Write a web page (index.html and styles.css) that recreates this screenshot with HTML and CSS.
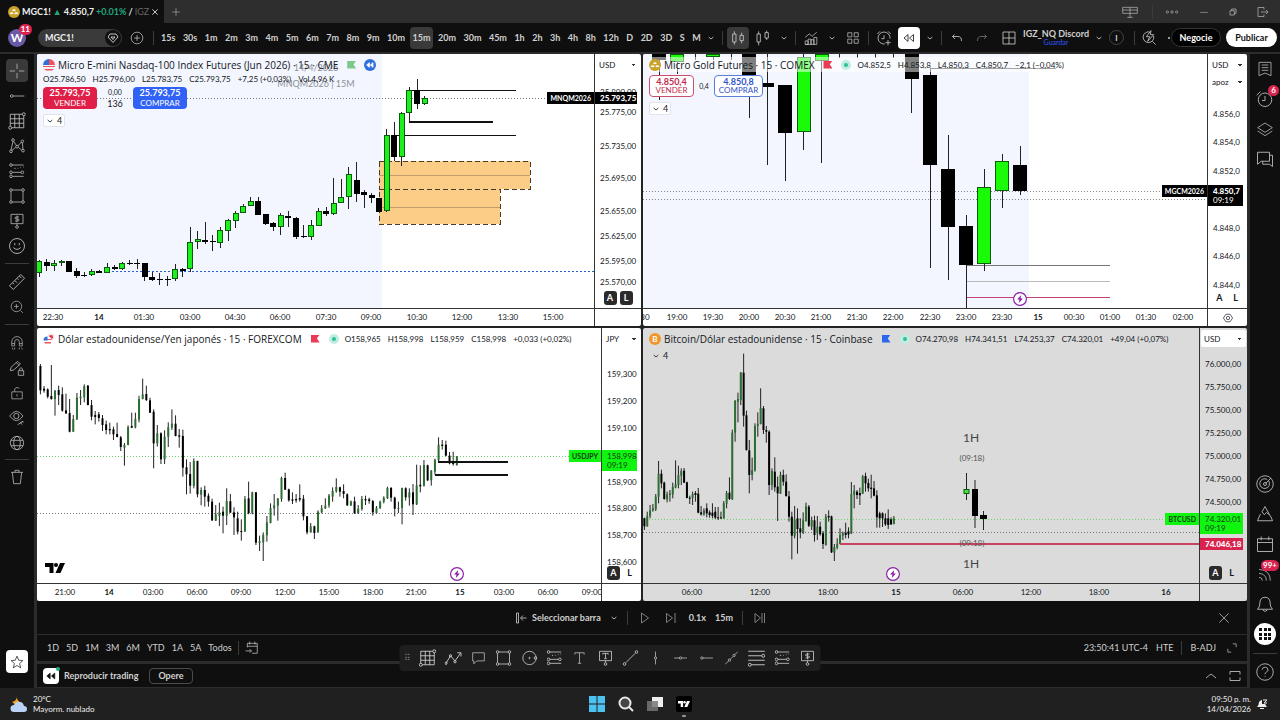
FILE: index.html
```html
<!DOCTYPE html>
<html lang="es">
<head>
<meta charset="utf-8">
<title>MGC1! 4.850,7 +0.01% / IGZ_NQ Discord</title>
<link rel="stylesheet" href="styles.css">
</head>
<body>
<svg class="sprite" aria-hidden="true">
  <symbol id="i-caret" viewBox="0 0 24 24"><path d="M5 9l7 6 7-6"/></symbol>
  <symbol id="i-up" viewBox="0 0 24 24"><path d="M2 16l10-8 10 8"/></symbol>
  <symbol id="i-close" viewBox="0 0 24 24"><path d="M4 4l16 16M20 4L4 20"/></symbol>
  <symbol id="i-plus" viewBox="0 0 24 24"><path d="M12 3v18M3 12h18"/></symbol>
  <symbol id="i-pluscircle" viewBox="0 0 24 24"><circle cx="12" cy="12" r="10"/><path d="M12 7v10M7 12h10"/></symbol>
  <symbol id="i-cross" viewBox="0 0 24 24"><path d="M12 1v8M12 15v8M1 12h8M15 12h8"/></symbol>
  <symbol id="i-hray" viewBox="0 0 24 24"><circle cx="4" cy="12" r="2"/><path d="M6 12h17"/></symbol>
  <symbol id="i-hline" viewBox="0 0 24 24"><circle cx="12" cy="12" r="2"/><path d="M1 12h9M14 12h9"/></symbol>
  <symbol id="i-vline" viewBox="0 0 24 24"><circle cx="12" cy="12" r="2"/><path d="M12 1v9M12 14v9"/></symbol>
  <symbol id="i-gann" viewBox="0 0 24 24"><path d="M3 3h16M3 3v16M21 5v16M5 21h16M3 9h18M3 15h18M9 3v18M15 3v18"/><circle cx="21" cy="3" r="2"/><circle cx="3" cy="21" r="2"/></symbol>
  <symbol id="i-pattern" viewBox="0 0 24 24"><circle cx="6" cy="3" r="2"/><circle cx="20" cy="5" r="2"/><circle cx="3" cy="20" r="2"/><circle cx="12" cy="13" r="2"/><circle cx="21" cy="19" r="2"/><path d="M6 5L3 18M7 5l4 6M19 6l-6 6M20 7l1 10M14 14l5 4M10 14l-6 5"/></symbol>
  <symbol id="i-fib" viewBox="0 0 24 24"><path d="M5 3h17M5 20h17M8 8h2M13 8h1M17 7h1M21 6h1M5 14h13"/><circle cx="3" cy="3" r="2"/><circle cx="3" cy="14" r="2"/><circle cx="3" cy="20" r="2"/><circle cx="20" cy="14" r="2"/></symbol>
  <symbol id="i-lines" viewBox="0 0 24 24"><path d="M1 3h22M1 9h18M1 15h22M5 21h18"/><circle cx="21" cy="9" r="2"/><circle cx="3" cy="21" r="2"/></symbol>
  <symbol id="i-rect" viewBox="0 0 24 24"><path d="M5 3h14M5 21h14M3 5v14M21 5v14"/><circle cx="3" cy="3" r="2"/><circle cx="21" cy="3" r="2"/><circle cx="3" cy="21" r="2"/><circle cx="21" cy="21" r="2"/></symbol>
  <symbol id="i-price" viewBox="0 0 24 24"><path d="M3 2h18v14H3zM12 16v3M15 6h-4q-2 0-2 1.500t2 1.500h2q2 0 2 1.500T13 12H9M12 4v10"/><circle cx="12" cy="21" r="2"/></symbol>
  <symbol id="i-tbox" viewBox="0 0 24 24"><path d="M3 2h18v14H3zM12 16v3M8 7V5h8v2M12 5v8M10 13h4"/><circle cx="12" cy="21" r="2"/></symbol>
  <symbol id="i-smile" viewBox="0 0 24 24"><circle cx="12" cy="12" r="10"/><path d="M9 8v3M15 8v3M7 14q5 5 10 0"/></symbol>
  <symbol id="i-ruler" viewBox="0 0 24 24"><path d="M2 17L17 2l5 5L7 22zM6 13l2 2M9 10l3 3M12 7l2 2M15 4l3 3"/></symbol>
  <symbol id="i-zoom" viewBox="0 0 24 24"><circle cx="11" cy="11" r="9"/><path d="M18 18l4 4M11 7v8M7 11h8"/></symbol>
  <symbol id="i-magnet" viewBox="0 0 24 24"><path d="M3 17v-7a9 9 0 0 1 18 0v7h-5v-7a4 4 0 0 0-8 0v7zM3 13h5M16 13h5M4 20l1 3M8 20v3M16 20v3M20 20l1 3"/></symbol>
  <symbol id="i-pencil" viewBox="0 0 24 24"><path d="M2 16l1-5L13 2l4 4L7 15zM11 4l4 4M14 16h8v7h-8zM16 16v-3q2-3 4 0v3M18 19v1"/></symbol>
  <symbol id="i-lock" viewBox="0 0 24 24"><path d="M3 10h18v12H3zM8 10V5q4-5 8-1M12 14v4"/></symbol>
  <symbol id="i-eye" viewBox="0 0 24 24"><path d="M1 9q10-14 20 0Q11 23 1 9z"/><circle cx="11" cy="9" r="4"/><path d="M13 22l5-3 3-2M16 18l4 4M19 17l3 1"/></symbol>
  <symbol id="i-globe" viewBox="0 0 24 24"><circle cx="12" cy="12" r="10"/><ellipse cx="12" cy="12" rx="5" ry="10"/><path d="M3 8h18M3 16h18"/></symbol>
  <symbol id="i-trash" viewBox="0 0 24 24"><path d="M3 5h18M9 5V2h6v3M5 5l2 17h10l2-17"/></symbol>
  <symbol id="i-star" viewBox="0 0 24 24"><path d="M12 2l3 7 7 .6-5.500 5 1.800 7.400L12 18l-6.300 4 1.800-7.400L2 9.600 9 9z"/></symbol>
  <symbol id="i-candles" viewBox="0 0 24 24"><path d="M4 6h5v12H4zM6.500 2v4M6.500 18v4M15 8h5v8h-5zM17.500 4v4M17.500 16v4"/></symbol>
  <symbol id="i-candles2" viewBox="0 0 24 24"><path d="M3 6h5v12H3zM5.500 2v4M5.500 18v5M15 4h5v8h-5zM17.500 1v3M17.500 12v3"/></symbol>
  <symbol id="i-ind" viewBox="0 0 24 24"><path d="M2 23v-6h5v6zM7 23V14h5v9M12 23v-8h5v8M17 23V11h5v12H2M2 11l7-6 5 4 8-7"/></symbol>
  <symbol id="i-grid4" viewBox="0 0 24 24"><path d="M3 3h7v7H3zM14 3h7v7h-7zM3 14h7v7H3zM14 14h7v7h-7z"/></symbol>
  <symbol id="i-alarmplus" viewBox="0 0 24 24"><path d="M13 21a9 9 0 1 1 8-8M12 8v5H8M2 6l4-4M18 2l4 4M18 15v8M14 19h8"/></symbol>
  <symbol id="i-rew" viewBox="0 0 24 24"><path d="M10 5v14L2 12zM21 5v14l-8-7z"/></symbol>
  <symbol id="i-undo" viewBox="0 0 24 24"><path d="M7 5L3 9l5 5M3 9h11q7 0 7 9"/></symbol>
  <symbol id="i-redo" viewBox="0 0 24 24"><path d="M17 5l4 4-5 5M21 9H10q-7 0-7 9"/></symbol>
  <symbol id="i-layout" viewBox="0 0 24 24"><path d="M3 3h18v18H3zM12 3v18M3 12h18"/></symbol>
  <symbol id="i-quick" viewBox="0 0 24 24"><path d="M13 3a8 8 0 1 0 6 6M17 17l5 5M15 1l-7 9h5l-3 7 9-10h-5z"/></symbol>
  <symbol id="i-gem" viewBox="0 0 24 24"><path d="M6 4h12l4 6-10 11L2 10zM8 10l4 5 4-5z"/></symbol>
  <symbol id="i-split" viewBox="0 0 24 24"><path d="M1 5h22v9H1zM12 5v15M1 9h22M8 20h8"/></symbol>
  <symbol id="i-dots" viewBox="0 0 24 24"><circle cx="4" cy="12" r="2"/><circle cx="12" cy="12" r="2"/><circle cx="20" cy="12" r="2"/></symbol>
  <symbol id="i-min" viewBox="0 0 24 24"><path d="M3 13h18"/></symbol>
  <symbol id="i-restore" viewBox="0 0 24 24"><path d="M3 8h13v13H3zM8 8V3h13v13h-5"/></symbol>
  <symbol id="i-exit" viewBox="0 0 24 24"><path d="M14 7V3H2v18h12v-4M8 12h14M18 8l4 4-4 4"/></symbol>
  <symbol id="i-list" viewBox="0 0 24 24"><path d="M3 2h18v20l-9-4-9 4zM7 6h10M7 10h10M7 14h10"/></symbol>
  <symbol id="i-alarm" viewBox="0 0 24 24"><circle cx="12" cy="13" r="9"/><path d="M12 8v6H8M1 7l5-5"/></symbol>
  <symbol id="i-layers" viewBox="0 0 24 24"><path d="M12 3l11 7-11 7L1 10zM1 15l11 7 11-7"/></symbol>
  <symbol id="i-chat" viewBox="0 0 24 24"><path d="M2 3h16v12H7l-5 4zM18 7h4v15l-4-3H9v-4"/></symbol>
  <symbol id="i-target" viewBox="0 0 24 24"><circle cx="12" cy="12" r="11"/><path d="M17 8a6.500 6.500 0 1 1-2-2"/><circle cx="12" cy="12" r="2"/><path d="M13 11l7-7"/></symbol>
  <symbol id="i-pyramid" viewBox="0 0 24 24"><path d="M12 2l6 11-4-3-3 3-3-4zM4 16l-2 5h20l-2-5-2-3M6 12l-2 4"/></symbol>
  <symbol id="i-cal" viewBox="0 0 24 24"><path d="M2 5h20v17H2zM2 10h20M7 2v5M17 2v5"/></symbol>
  <symbol id="i-calgo" viewBox="0 0 24 24"><path d="M4 11V4h17v17h-9M4 9h17M8 1v5M17 1v5M1 17h10M8 14l3 3-3 3"/></symbol>
  <symbol id="i-feed" viewBox="0 0 24 24"><path d="M3 5q17 1 17 17M3 11q11 1 11 11M3 17q5 0 5 5"/></symbol>
  <symbol id="i-bell" viewBox="0 0 24 24"><path d="M2 19h20q-3-3-3-7 0-9-7-9t-7 9q0 4-3 7zM9 20q3 4 6 0"/></symbol>
  <symbol id="i-help" viewBox="0 0 24 24"><circle cx="12" cy="12" r="11"/><path d="M8 9q1-4 4.500-3.500T16 9.500q0 1.500-2 2.500t-2 3M12 17.500v1"/></symbol>
  <symbol id="i-wave" viewBox="0 0 24 24"><path d="M2 19l6-10 6 7 7-10"/><circle cx="2" cy="19" r="1.500"/><circle cx="8" cy="9" r="1.500"/><circle cx="14" cy="17" r="1.500"/><path d="M17 5h5v5"/></symbol>
  <symbol id="i-note" viewBox="0 0 24 24"><path d="M2 3h20v14H9l-5 5v-5H2z"/></symbol>
  <symbol id="i-ellipse" viewBox="0 0 24 24"><circle cx="12" cy="12" r="10"/><circle cx="12" cy="12" r="1"/><circle cx="21" cy="12" r="2"/></symbol>
  <symbol id="i-text" viewBox="0 0 24 24"><path d="M4 6V3h16v3M12 3v18M9 21h6"/></symbol>
  <symbol id="i-trend" viewBox="0 0 24 24"><circle cx="3" cy="21" r="2"/><circle cx="21" cy="3" r="2"/><path d="M5 19L19 5"/></symbol>
  <symbol id="i-ext" viewBox="0 0 24 24"><path d="M1 23l6-6M10 14l5-5M18 6l5-5"/><circle cx="8.500" cy="15.500" r="2"/><circle cx="16.500" cy="7.500" r="2"/></symbol>
  <symbol id="i-selbar" viewBox="0 0 24 24"><path d="M3 2h4v20H3zM23 12H12M16 7l-5 5 5 5"/></symbol>
  <symbol id="i-play" viewBox="0 0 24 24"><path d="M5 2v20l14-10z"/></symbol>
  <symbol id="i-step" viewBox="0 0 24 24"><path d="M3 3v18l12-9zM20 2v20"/></symbol>
  <symbol id="i-skip" viewBox="0 0 24 24"><path d="M2 3v18l11-9zM16 2v20M21 2v20"/></symbol>
  <symbol id="i-expand" viewBox="0 0 24 24"><path d="M2 14v8h8M14 2h8v8"/></symbol>
  <symbol id="i-frame" viewBox="0 0 24 24"><path d="M2 9V3h20v6M2 15v6h20v-6"/></symbol>
  <symbol id="i-gear" viewBox="0 0 24 24"><path d="M7 3h10l6 9-6 9H7l-6-9z"/><circle cx="12" cy="12" r="4"/></symbol>
  <symbol id="i-bolt" viewBox="0 0 24 24"><circle cx="12" cy="12" r="11" fill="#fff"/><path d="M14 5l-7 8h4l-1 6 7-8h-4z" fill="#8b22a5" stroke="none"/></symbol>
  <symbol id="i-gold" viewBox="0 0 24 24"><circle cx="12" cy="12" r="12" fill="#c9a227" stroke="none"/><path d="M9 6h6l1.500 5h-9zM4 12h7l1 5H3zM13 12h7l1 5h-9z" fill="#fff" stroke="#c9a227"/></symbol>
  <symbol id="i-tv" viewBox="0 0 40 24"><path d="M0 2h17v20H9V10H0z" fill="currentColor" stroke="none"/><circle cx="22" cy="6" r="4" fill="currentColor" stroke="none"/><path d="M30 2h10l-9 20H21z" fill="currentColor" stroke="none"/></symbol>
</svg>

<header class="titlebar">
  <div class="tab">
    <svg class="ic s12"><use href="#i-gold"/></svg>
    <span class="tab-name">MGC1!</span><span class="up">▲</span><span>4.850,7</span><span class="up">+0.01%</span><span>/</span><span class="fade">IGZ</span>
    <button class="plain" aria-label="Cerrar pestaña"><svg class="ic s8"><use href="#i-close"/></svg></button>
  </div>
  <button class="plain newtab" aria-label="Nueva pestaña"><svg class="ic s10"><use href="#i-plus"/></svg></button>
  <div class="wincontrols">
    <button class="plain" aria-label="Dividir"><svg class="ic s16"><use href="#i-split"/></svg></button>
    <i class="vsep"></i>
    <button class="plain" aria-label="Más"><svg class="ic s14"><use href="#i-dots"/></svg></button>
    <button class="plain" aria-label="Minimizar"><svg class="ic s10"><use href="#i-min"/></svg></button>
    <button class="plain" aria-label="Restaurar"><svg class="ic s8"><use href="#i-restore"/></svg></button>
    <button class="plain" aria-label="Salir"><svg class="ic s12"><use href="#i-exit"/></svg></button>
  </div>
</header>

<nav class="toolbar">
  <button class="avatar" aria-label="Cuenta">W<span class="badge">11</span></button>
  <button class="symbol">MGC1!<span class="gem"><svg class="ic s12"><use href="#i-gem"/></svg></span></button>
  <button class="plain" aria-label="Comparar"><svg class="ic s14"><use href="#i-pluscircle"/></svg></button>
  <i class="vsep"></i>
  <div class="intervals">
    <button>15s</button><button>30s</button><button>1m</button><button>2m</button><button>3m</button><button>4m</button><button>5m</button><button>6m</button><button>7m</button><button>8m</button><button>9m</button><button>10m</button><button class="on">15m</button><button>20m</button><button>30m</button><button>45m</button><button>1h</button><button>2h</button><button>3h</button><button>4h</button><button>8h</button><button>12h</button><button>D</button><button>2D</button><button>3D</button><button>S</button><button>M</button>
  </div>
  <div class="tools">
    <button class="car" aria-label="Intervalos"><svg class="ic s8"><use href="#i-caret"/></svg></button>
    <i class="vsep"></i>
    <button class="tb on" aria-label="Velas"><svg class="ic s16"><use href="#i-candles"/></svg></button>
    <button class="tb" aria-label="Velas huecas"><svg class="ic s16"><use href="#i-candles2"/></svg></button>
    <button class="car" aria-label="Tipos"><svg class="ic s8"><use href="#i-caret"/></svg></button>
    <i class="vsep"></i>
    <button class="tb" aria-label="Indicadores"><svg class="ic s14"><use href="#i-ind"/></svg></button>
    <button class="car" aria-label="Favoritos"><svg class="ic s8"><use href="#i-caret"/></svg></button>
    <button class="tb" aria-label="Plantillas"><svg class="ic s14"><use href="#i-grid4"/></svg></button>
    <i class="vsep"></i>
    <button class="tb" aria-label="Alerta"><svg class="ic s16"><use href="#i-alarmplus"/></svg></button>
    <button class="tb white" aria-label="Repetición"><svg class="ic s12"><use href="#i-rew"/></svg></button>
    <button class="car" aria-label="Opciones de repetición"><svg class="ic s8"><use href="#i-caret"/></svg></button>
    <i class="vsep"></i>
    <button class="tb" aria-label="Deshacer"><svg class="ic s12"><use href="#i-undo"/></svg></button>
    <button class="tb dim" aria-label="Rehacer"><svg class="ic s12"><use href="#i-redo"/></svg></button>
  </div>
  <div class="account">
    <button class="tb" aria-label="Diseño"><svg class="ic s16"><use href="#i-layout"/></svg></button>
    <button class="layoutname">IGZ_NQ Discord<small>Guardar</small></button>
    <button class="car" aria-label="Diseños"><svg class="ic s8"><use href="#i-caret"/></svg></button>
    <button class="info" aria-label="Información">I</button>
    <i class="vsep"></i>
    <button class="tb" aria-label="Búsqueda rápida"><svg class="ic s16"><use href="#i-quick"/></svg></button>
    <i class="more"></i>
    <button class="pill dark">Negocie</button>
    <button class="pill light">Publicar</button>
  </div>
</nav>

<div class="workspace">
  <aside class="rail left">
    <button class="on" aria-label="Cruz"><svg class="ic s16"><use href="#i-cross"/></svg></button>
    <button aria-label="Rayo horizontal"><svg class="ic s16"><use href="#i-hray"/></svg></button>
    <button aria-label="Gann"><svg class="ic s18"><use href="#i-gann"/></svg></button>
    <button aria-label="Patrones"><svg class="ic s16"><use href="#i-pattern"/></svg></button>
    <button aria-label="Fibonacci"><svg class="ic s16"><use href="#i-fib"/></svg></button>
    <button aria-label="Rectángulo"><svg class="ic s16"><use href="#i-rect"/></svg></button>
    <button aria-label="Etiqueta de precio"><svg class="ic s16"><use href="#i-price"/></svg></button>
    <button aria-label="Iconos"><svg class="ic s18"><use href="#i-smile"/></svg></button>
    <hr>
    <button aria-label="Medir"><svg class="ic s18"><use href="#i-ruler"/></svg></button>
    <button aria-label="Ampliar"><svg class="ic s14"><use href="#i-zoom"/></svg></button>
    <hr>
    <button aria-label="Imán"><svg class="ic s14"><use href="#i-magnet"/></svg></button>
    <button aria-label="Modo dibujo"><svg class="ic s16"><use href="#i-pencil"/></svg></button>
    <button aria-label="Bloquear"><svg class="ic s14"><use href="#i-lock"/></svg></button>
    <button aria-label="Ocultar"><svg class="ic s16"><use href="#i-eye"/></svg></button>
    <button aria-label="Sincronizar"><svg class="ic s16"><use href="#i-globe"/></svg></button>
    <hr class="tight">
    <button aria-label="Eliminar"><svg class="ic s16"><use href="#i-trash"/></svg></button>
    <button class="fav" aria-label="Favoritos"><svg class="ic s14"><use href="#i-star"/></svg></button>
  </aside>

  <main class="center">
    <div class="charts">
      <section class="chart" id="c1">
        <div class="plot"></div>
        <div class="legend">
          <div class="ltitle"><svg class="s12 coin" viewBox="0 0 12 12"><circle cx="6" cy="6" r="6" fill="#f4f4f6"/><path d="M6 0a6 6 0 0 1 6 6H6zM6 2h5M6 7h6v1H0v-1zM1 10h10l-2 1.500H3z" fill="#ef5360"/><path d="M6 0v6H0a6 6 0 0 1 6-6z" fill="#2f6fd8"/></svg><h2>Micro E-mini Nasdaq-100 Index Futures (Jun 2026) · 15 · CME</h2><i class="flag green"></i><i class="rewdot"><svg class="ic s8"><use href="#i-rew"/></svg></i></div>
          <div class="ohlc"><span>O25.786,50</span><span>H25.796,00</span><span>L25.783,75</span><span>C25.793,75</span><span>+7,25 (+0,03%)</span><span>Vol.4,96 K</span></div>
          <div class="trade solid"><button class="sell"><b>25.793,75</b>VENDER</button><span class="spread"><small>0,00</small>136</span><button class="buy"><b>25.793,75</b>COMPRAR</button></div>
          <button class="count"><svg class="ic s8"><use href="#i-caret"/></svg>4</button>
        </div>
        <div class="prices"><select aria-label="Moneda"><option>USD</option></select><div class="al"><button class="on">A</button><button class="on">L</button></div></div>
        <div class="times"></div><div class="corner"></div>
      </section>
      <section class="chart" id="c2">
        <div class="plot"></div>
        <div class="legend">
          <div class="row"><div class="ltitle"><svg class="ic s12 coin"><use href="#i-gold"/></svg><h2>Micro Gold Futures · 15 · COMEX</h2><i class="flag red"></i><i class="live"></i></div>
          <div class="ohlc"><span>O4.852,5</span><span>H4.853,8</span><span>L4.850,3</span><span>C4.850,7</span><span>−2,1 (−0,04%)</span></div></div>
          <div class="trade outline"><button class="sell"><b>4.850,4</b>VENDER</button><span class="spread"><small>0,4</small></span><button class="buy"><b>4.850,8</b>COMPRAR</button></div>
          <button class="count"><svg class="ic s8"><use href="#i-caret"/></svg>4</button>
        </div>
        <div class="prices"><select aria-label="Moneda"><option>USD</option></select><select aria-label="Unidad"><option>apoz</option></select><div class="al"><button>A</button><button>L</button></div></div>
        <div class="times"></div><div class="corner"><svg class="ic s10"><use href="#i-gear"/></svg></div>
      </section>
      <section class="chart" id="c3">
        <div class="plot"></div>
        <div class="legend">
          <div class="row"><div class="ltitle"><svg class="s12 coin" viewBox="0 0 12 12"><circle cx="8" cy="4" r="3.500" fill="#f6dfe3"/><circle cx="8" cy="4" r="2" fill="#e23b4e"/><circle cx="4.500" cy="7.500" r="4" fill="#fff"/><path d="M1 9h7v1.500H2zM4 6h4.500v1H4z" fill="#ef5360"/><path d="M4.500 3.500v4h-4a4 4 0 0 1 4-4z" fill="#2f6fd8"/></svg><h2>Dólar estadounidense/Yen japonés · 15 · FOREXCOM</h2><i class="flag red"></i><i class="live"></i></div>
          <div class="ohlc"><span>O158,965</span><span>H158,998</span><span>L158,959</span><span>C158,998</span><span>+0,033 (+0,02%)</span></div></div>
        </div>
        <div class="prices"><select aria-label="Moneda"><option>JPY</option></select><div class="al"><button class="on">A</button><button>L</button></div></div>
        <div class="times"></div><div class="corner"></div>
      </section>
      <section class="chart gray" id="c4">
        <div class="plot"></div>
        <div class="legend">
          <div class="row"><div class="ltitle"><i class="btc coin">B</i><h2>Bitcoin/Dólar estadounidense · 15 · Coinbase</h2><i class="flag blue"></i><i class="live"></i></div>
          <div class="ohlc"><span>O74.270,98</span><span>H74.341,51</span><span>L74.253,37</span><span>C74.320,01</span><span>+49,04 (+0,07%)</span></div></div>
          <button class="count bare"><svg class="ic s8"><use href="#i-caret"/></svg>4</button>
        </div>
        <div class="prices"><select aria-label="Moneda"><option>USD</option></select><div class="al"><button class="on">A</button><button>L</button></div></div>
        <div class="times"></div><div class="corner"></div>
      </section>
    </div>

    <div class="replay">
      <div class="replay-mid">
        <button class="plain"><svg class="ic s12"><use href="#i-selbar"/></svg>Seleccionar barra<svg class="ic s8 gapl"><use href="#i-caret"/></svg></button>
        <i class="vsep"></i>
        <button class="plain mid" aria-label="Reproducir"><svg class="ic s12"><use href="#i-play"/></svg></button>
        <button class="plain mid" aria-label="Avanzar"><svg class="ic s12"><use href="#i-step"/></svg></button>
        <button class="plain">0.1x</button><button class="plain">15m</button>
        <i class="vsep"></i>
        <button class="plain mid" aria-label="Ir a tiempo real"><svg class="ic s12"><use href="#i-skip"/></svg></button>
      </div>
      <button class="plain rclose" aria-label="Cerrar repetición"><svg class="ic s14"><use href="#i-close"/></svg></button>
    </div>

    <div class="ranges">
      <button>1D</button><button>5D</button><button>1M</button><button>3M</button><button>6M</button><button>YTD</button><button>1A</button><button>5A</button><button>Todos</button>
      <i class="vsep"></i>
      <button aria-label="Ir a fecha"><svg class="ic s14"><use href="#i-calgo"/></svg></button>
      <div class="clock"><button>23:50:41 UTC-4</button><button>HTE</button><i class="vsep"></i><button>B-ADJ</button><button class="gapl" aria-label="Ampliar"><svg class="ic s10"><use href="#i-expand"/></svg></button></div>
    </div>

    <div class="trading">
      <button class="tb white small" aria-label="Repetición"><svg class="ic s10 solidic"><use href="#i-rew"/></svg><i class="dot"></i></button>
      <span>Reproducir trading</span>
      <button class="opere">Opere</button>
      <div class="tright"><button class="plain" aria-label="Abrir panel"><svg class="ic s12"><use href="#i-up"/></svg></button><button class="plain" aria-label="Maximizar panel"><svg class="ic s12"><use href="#i-frame"/></svg></button></div>
    </div>

    <div class="drawbar">
      <span class="grip">⠿</span>
      <button aria-label="Gann"><svg class="ic s18"><use href="#i-gann"/></svg></button>
      <button aria-label="Ondas"><svg class="ic s18"><use href="#i-wave"/></svg></button>
      <button aria-label="Nota"><svg class="ic s14"><use href="#i-note"/></svg></button>
      <button aria-label="Rectángulo"><svg class="ic s16"><use href="#i-rect"/></svg></button>
      <button aria-label="Círculo"><svg class="ic s16"><use href="#i-ellipse"/></svg></button>
      <button aria-label="Fibonacci"><svg class="ic s16"><use href="#i-fib"/></svg></button>
      <button aria-label="Texto"><svg class="ic s14"><use href="#i-text"/></svg></button>
      <button aria-label="Texto anclado"><svg class="ic s16"><use href="#i-tbox"/></svg></button>
      <button aria-label="Línea de tendencia"><svg class="ic s16"><use href="#i-trend"/></svg></button>
      <button aria-label="Línea vertical"><svg class="ic s14"><use href="#i-vline"/></svg></button>
      <button aria-label="Línea horizontal"><svg class="ic s14"><use href="#i-hline"/></svg></button>
      <button aria-label="Rayo"><svg class="ic s14"><use href="#i-hray"/></svg></button>
      <button aria-label="Línea extendida"><svg class="ic s14"><use href="#i-ext"/></svg></button>
      <button aria-label="Retroceso"><svg class="ic s18"><use href="#i-lines"/></svg></button>
      <button aria-label="Extensión"><svg class="ic s16"><use href="#i-fib"/></svg></button>
      <button aria-label="Precio"><svg class="ic s16"><use href="#i-price"/></svg></button>
    </div>
  </main>

  <aside class="rail right">
    <button aria-label="Lista"><svg class="ic s16"><use href="#i-list"/></svg></button>
    <button aria-label="Alertas"><svg class="ic s18"><use href="#i-alarm"/></svg><span class="badge">6</span></button>
    <button aria-label="Capas"><svg class="ic s16"><use href="#i-layers"/></svg></button>
    <button aria-label="Chats"><svg class="ic s18"><use href="#i-chat"/></svg></button>
    <button class="push" aria-label="Filtros"><svg class="ic s18"><use href="#i-target"/></svg></button>
    <button aria-label="Pine"><svg class="ic s18"><use href="#i-pyramid"/></svg></button>
    <button aria-label="Calendario"><svg class="ic s18"><use href="#i-cal"/></svg></button>
    <button aria-label="Noticias"><svg class="ic s16"><use href="#i-feed"/></svg><span class="badge">99+</span></button>
    <button aria-label="Notificaciones"><svg class="ic s18"><use href="#i-bell"/></svg></button>
    <button class="apps" aria-label="Productos"><svg class="s12" viewBox="0 0 12 12"><path d="M0 0h3v3H0zM5 0h3v3H5zM9 0h3v3H9zM0 5h3v3H0zM5 5h3v3H5zM9 5h3v3H9zM0 9h3v3H0zM5 9h3v3H5zM9 9h3v3H9z" fill="#111"/></svg></button>
    <hr>
    <button aria-label="Ayuda"><svg class="ic s18"><use href="#i-help"/></svg></button>
  </aside>
</div>

<footer class="taskbar">
  <div class="weather"><svg class="s18" viewBox="0 0 18 18"><path d="M7 1q-1 5 5 7l-5 3-5-4q5-1 5-6z" fill="#f5a623"/><path d="M4 17a3.500 3.500 0 0 1 0-7q2-4 6-3 3 0 4 4 3 0 3 3t-3 3z" fill="#b9d2f5"/></svg><p>20°C<br>Mayorm. nublado</p></div>
  <div class="apps-mid">
    <svg class="s16" viewBox="0 0 16 16"><path d="M0 0h7.500v7.500H0zM8.500 0H16v7.500H8.500zM0 8.500h7.500V16H0zM8.500 8.500H16V16H8.500z" fill="#4cc2f1"/></svg>
    <svg class="s16" viewBox="0 0 16 16"><circle cx="7" cy="7" r="5.500" fill="#444" stroke="#e8e8e8" stroke-width="2"/><path d="M11 11l4 4" stroke="#e8e8e8" stroke-width="2"/></svg>
    <svg class="s16" viewBox="0 0 16 16"><path d="M5 1h11v10H5z" fill="#eee"/><path d="M0 5h11v10H0z" fill="#777" fill-opacity=".85"/></svg>
    <span class="tvapp"><svg class="ic tvs"><use href="#i-tv"/></svg></span>
  </div>
  <div class="tray"><p>09:50 p. m.<br>14/04/2026</p><svg class="s12" viewBox="0 0 12 12"><path d="M1 9q2-2 2-5 3-4 6 0 0 3 2 5zM4 10h4v1H4z" fill="#eee"/><path d="M6 2h5v4H6z" fill="#202020"/><path d="M7 2h4L8 5h3" fill="none" stroke="#eee"/></svg></div>
</footer>
<script src="charts.js"></script>
</body>
</html>
```
FILE: charts.js
```js
// Candle rows: high, body top, body bottom, low (plot units), then 1 for a rising bar.
const c1 = [[260,261,273,277,1],[259,262,266,271],[260,263,266,271,1],[260,261,263,266,1],[261,261,272,272],[268,271,276,278],[272,275,276,277],[269,271,275,276,1],[270,271,273,273],[263,267,273,273,1],[265,267,269,270],[262,263,269,270,1],[260,263,264,265],[259,263,264,269],[263,263,277,281],[272,277,280,281],[273,279,280,285],[276,279,280,286],[264,269,279,281,1],[268,269,271,277],[227,242,269,272,1],[231,239,242,249,1],[222,240,242,244],[235,241,242,251],[227,230,243,248,1],[219,220,231,241,1],[211,213,221,228,1],[204,206,213,213,1],[197,201,206,206,1],[197,201,215,215],[214,214,224,225],[222,223,227,231],[213,215,227,235,1],[211,216,218,227],[217,218,237,239],[225,236,237,238],[220,225,237,240,1],[208,211,226,226,1],[207,211,214,216],[178,203,214,215,1],[179,197,203,203,1],[167,174,197,209,1],[162,180,194,202],[190,192,195,208],[193,195,198,203],[198,198,212,212],[129,135,211,212,1],[122,135,157,161],[112,113,157,166,1],[87,90,113,121,1],[79,90,104,109],[96,98,104,105,1]];
const c2 = [[54,54,60,100],[54,54,62,74,1],[54,54,54,60],[54,54,57,60,1],[54,54,54,60],[54,54,75,118],[54,83,87,165],[85,85,133,181],[54,57,132,150,1],[54,54,61,163,1],[54,54,54,58],[54,54,54,58],[54,54,54,58],[54,54,54,58],[54,54,79,113],[68,75,165,268],[135,169,227,280],[215,226,265,308],[169,187,264,271,1],[154,161,191,208,1],[146,165,191,195]];
const c3 = [[117,123,196,208],[183,191,197,203],[190,193,215,220],[120,213,222,224],[195,197,222,272,1],[182,195,210,240],[187,208,257,260],[206,256,265,267],[222,264,320,322],[270,282,320,321,1],[204,218,283,285,1],[195,215,220,240,1],[178,184,217,232,1],[180,182,240,241],[225,240,275,286],[258,270,276,298],[261,268,279,290],[270,280,300,318],[287,298,315,328],[293,312,316,328],[305,313,328,345],[293,327,336,337],[333,337,366,378],[354,360,368,422,1],[301,306,360,361,1],[263,303,308,309],[263,282,307,310,1],[212,222,284,292,1],[161,208,222,223,1],[182,207,225,228],[218,226,263,264],[253,260,355,430],[300,325,355,365,1],[322,325,403,417],[316,335,403,417,1],[292,307,335,366,1],[253,296,308,315,1],[271,296,333,334],[312,331,335,368],[314,333,428,455],[403,427,448,508],[411,447,482,506],[400,408,483,490,1],[407,408,508,517],[487,495,509,541,1],[482,495,515,545],[505,512,530,545],[521,530,586,588],[540,568,587,588,1],[533,562,573,603,1],[545,560,572,625],[490,528,572,600,1],[507,529,563,563],[547,562,577,630],[560,580,620,628],[583,618,621,647],[513,522,619,621,1],[470,520,564,568],[500,502,564,568,1],[501,502,653,660],[632,649,654,678,1],[622,630,652,708,1],[573,592,631,650,1],[535,549,594,595,1],[507,541,550,572,1],[519,521,542,587,1],[455,459,522,530,1],[443,459,494,495],[491,493,526,530],[502,523,527,537],[507,522,526,533],[478,519,524,530],[510,521,574,586],[573,574,622,628],[594,604,622,623,1],[602,604,624,642],[556,560,622,623,1],[540,550,562,565,1],[520,542,550,552,1],[507,512,541,548,1],[487,498,515,530,1],[460,486,499,503,1],[485,487,500,515],[478,498,507,520],[505,508,541,543],[527,529,541,543,1],[515,529,564,567],[540,551,565,567,1],[513,522,552,557,1],[512,522,526,540],[518,523,528,536],[525,528,562,572],[543,548,564,566,1],[527,530,549,552,1],[514,518,530,535,1],[485,489,520,522,1],[486,489,518,530],[515,518,551,574],[530,549,551,564,1],[488,489,549,598,1],[487,490,517,527],[490,502,518,542,1],[477,502,538,570],[419,481,538,540,1],[421,479,484,502],[405,420,482,485,1],[419,421,466,468],[435,437,466,482,1],[401,405,440,449,1],[337,359,406,411,1],[345,359,363,374],[347,359,392,394],[381,392,415,418],[380,413,417,422],[393,394,420,422,1]];
const c4 = [[578,580,604,615],[560,573,604,605,1],[540,556,573,580,1],[537,550,556,560,1],[507,515,553,558,1],[408,446,515,535,1],[434,446,475,490],[470,473,522,524],[500,508,523,532,1],[495,505,510,530,1],[473,486,508,520,1],[406,478,488,490,1],[422,450,480,490,1],[430,438,452,480,1],[429,437,473,474],[470,472,519,520],[512,518,520,537],[500,507,519,540,1],[498,504,510,530],[489,506,563,565],[543,562,568,572],[550,556,568,572,1],[535,550,565,577],[556,562,570,578],[535,563,573,580],[546,560,578,582],[546,577,580,585],[560,577,580,582],[528,535,580,581,1],[498,504,536,550,1],[457,503,522,525],[314,323,523,525,1],[225,228,323,350,1],[203,222,230,292,1],[141,143,225,240,1],[86,143,272,305],[257,271,375,377],[345,376,450,505],[398,435,450,466,1],[295,303,436,440,1],[262,297,303,335,1],[190,249,297,298,1],[243,250,315,327],[303,315,320,353],[316,320,480,510],[430,438,480,495,1],[397,440,487,500],[455,485,505,588],[440,449,506,507,1],[434,450,470,482],[448,470,513,515],[498,514,575,590],[560,575,632,703],[543,585,632,640,1],[550,580,612,686],[580,610,622,640],[562,586,622,627,1],[533,544,588,590,1],[540,545,602,606],[575,585,605,615,1],[572,586,630,650],[573,605,625,645,1],[590,605,628,632],[618,625,657,672],[567,575,660,662,1],[556,573,577,590],[572,574,682,684],[657,666,683,708,1],[640,656,668,673,1],[610,630,657,658,1],[620,625,632,645,1],[593,623,630,640],[607,619,628,640],[471,507,625,627,1],[480,497,509,550,1],[495,500,510,522],[488,504,511,540],[450,454,506,507,1],[443,453,475,500],[461,474,490,500],[449,488,492,520],[468,490,512,514],[496,511,577,608],[560,565,580,608],[562,565,580,606],[565,580,598,603],[553,580,600,612],[577,583,598,600],[573,580,597,598,1]];

const third = rows => rows.map(([h, t, b, l, up]) => [325 + h / 3, 325 + t / 3, 325 + b / 3, 325 + l / 3, up]);
const hl = (x1, x2, y, stroke, w = 1, dash = '') => `<line x1="${x1}" x2="${x2}" y1="${y}" y2="${y}" stroke="${stroke}" stroke-width="${w}" stroke-dasharray="${dash}"/>`;
const box = (x, y, w, h, fill, stroke, dash = '') => `<rect x="${x}" y="${y}" width="${w}" height="${h}" fill="${fill}" stroke="${stroke}" stroke-dasharray="${dash}"/>`;

function candles(rows, x0, step, w, up, edge) {
  return rows.map(([h, t, b, l, rise], i) => {
    const x = x0 + i * step;
    const wick = `<line x1="${x}" x2="${x}" y1="${h}" y2="${l}" stroke="#222" stroke-width="1"/>`;
    if (b <= t) return wick;
    const e = edge && rise ? 0.5 : 0;
    return wick + `<rect x="${x - w / 2 + e}" y="${t + e}" width="${w - 2 * e}" height="${Math.max(b - t - 2 * e, 1)}" fill="${rise ? up : '#000'}" stroke="${e ? '#0b5c0b' : 'none'}"/>`;
  }).join('');
}

const charts = [
  {
    id: 'c1', box: [37, 54, 557, 254],
    draw: box(37, 54, 345, 254, '#f3f6fe', 'none') +
      box(379, 161, 151, 28, '#fbcd87', '#4a3a22', '5 3') + box(379, 189, 121, 35, '#fbcd87', '#4a3a22', '5 3') +
      hl(379, 530, 175.5, '#c39c6b') + hl(379, 500, 207.5, '#c39c6b') +
      hl(37, 594, 98.5, '#777', 1, '1 2') + hl(112, 594, 271.5, '#2962c8', 1, '2 2') +
      hl(409, 516, 90.5, '#111', 1.5) + hl(409, 493, 122, '#111', 1.5) + hl(394, 516, 135.5, '#111', 1.5) +
      candles(c1, 39, 7.56, 6, '#1df01d', true),
    prices: [['25.800,00', 92], ['25.775,00', 112], ['25.735,00', 146], ['25.695,00', 178], ['25.655,00', 211], ['25.625,00', 236], ['25.595,00', 261], ['25.570,00', 282]],
    tags: [['black', 98, 'MNQM2026', '25.793,75']],
    times: [['22:30', 53], ['14', 99, 1], ['01:30', 144], ['03:00', 190], ['04:30', 235], ['06:00', 280], ['07:30', 326], ['09:00', 371], ['10:30', 417], ['12:00', 462], ['13:30', 508], ['15:00', 553]],
    notes: [['14/4/2026', 316, 68, 'wm'], ['MNQM2026 | 15M', 316, 84, 'wm']]
  },
  {
    id: 'c2', box: [643, 54, 564, 254],
    draw: box(643, 54, 386, 254, '#f3f6fe', 'none') +
      hl(643, 1207, 191.5, '#888', 1, '1 2') + hl(643, 1207, 199.5, '#888', 1, '1 2') +
      hl(930, 1056, 68.5, '#444') + hl(966, 1110, 265.5, '#777') + hl(966, 1110, 281.5, '#bbb') + hl(966, 1110, 297.5, '#c04474') +
      candles(c2, 659, 18.07, 14, '#1afb08', true),
    prices: [['4.856,0', 114], ['4.854,0', 142], ['4.852,0', 171], ['4.848,0', 228], ['4.846,0', 256], ['4.844,0', 285]],
    tags: [['black', 191, 'MGCM2026', '4.850,7', '09:19']],
    times: [['30', 645], ['19:00', 677], ['19:30', 713], ['20:00', 749], ['20:30', 785], ['21:00', 821], ['21:30', 857], ['22:00', 893], ['22:30', 930], ['23:00', 966], ['23:30', 1002], ['15', 1038, 1], ['00:30', 1074], ['01:00', 1110], ['01:30', 1146], ['02:00', 1183]],
    event: [1020, 299]
  },
  {
    id: 'c3', box: [37, 328, 564, 255],
    draw: hl(37, 601, 456.5, '#6fd06f', 1, '1 2') + hl(37, 601, 513.5, '#777', 1, '1 2') +
      candles(third(c3), 40.4, 3.653, 2, '#2d6e33') +
      hl(438, 508, 462, '#111', 2) + hl(435, 508, 475, '#111', 2),
    prices: [['159,300', 374], ['159,200', 401], ['159,100', 428], ['158,900', 482], ['158,800', 508], ['158,700', 535], ['158,600', 562]],
    tags: [['lime', 456, 'USDJPY', '158,998', '09:19']],
    times: [['21:00', 65], ['14', 109, 1], ['03:00', 153], ['06:00', 197], ['09:00', 241], ['12:00', 285], ['15:00', 329], ['18:00', 373], ['21:00', 416], ['15', 460, 1], ['03:00', 504], ['06:00', 548], ['09:00', 592]],
    event: [457, 574], logo: [55, 568]
  },
  {
    id: 'c4', box: [643, 328, 556, 255],
    draw: hl(643, 1199, 519.5, '#6fd06f', 1, '1 2') + hl(643, 1199, 532.5, '#777', 1, '1 2') +
      candles(third(c4), 644.4, 2.835, 2, '#2d6e33') + hl(840, 1199, 544, '#c8435f', 2) +
      candles([[473, 489, 494, 500, 1]], 966.5, 8.5, 6, '#45e045', true) + candles([[480, 489, 516, 528]], 975, 8.5, 6, '#111') + candles([[511, 515, 519, 530]], 983.5, 8.5, 7, '#111'),
    prices: [['76.000,00', 364], ['75.750,00', 387], ['75.500,00', 410], ['75.250,00', 433], ['75.000,00', 456], ['74.750,00', 479], ['74.500,00', 502]],
    tags: [['lime', 519, 'BTCUSD', '74.320,01', '09:19'], ['crimson', 544, '', '74.046,18']],
    times: [['06:00', 692], ['12:00', 760], ['18:00', 828], ['15', 896, 1], ['06:00', 963], ['12:00', 1031], ['18:00', 1099], ['16', 1166, 1]],
    notes: [['1H', 971, 438, 'big'], ['(09:18)', 972, 458, 'sm'], ['(09:18)', 972, 543, 'sm'], ['1H', 971, 564, 'big']],
    event: [893, 574]
  }
];

for (const c of charts) {
  const root = document.getElementById(c.id);
  const [x0, y0, w, h] = c.box;
  const px = x => `${((x - x0) / w * 100).toFixed(2)}%`;
  const py = y => `${((y - y0) / h * 100).toFixed(2)}%`;
  let plot = `<svg viewBox="${c.box.join(' ')}" preserveAspectRatio="none" aria-hidden="true">${c.draw}</svg>`;
  for (const [t, x, y, k] of c.notes || []) plot += `<span class="note ${k}" style="left:${px(x)};top:${py(y)}">${t}</span>`;
  if (c.event) plot += `<svg class="ic s14 event" style="left:${px(c.event[0])};top:${py(c.event[1])}"><use href="#i-bolt"/></svg>`;
  if (c.logo) plot += `<svg class="ic logo" style="left:${px(c.logo[0])};top:${py(c.logo[1])}"><use href="#i-tv"/></svg>`;
  for (const [k, y, name] of c.tags) if (name) plot += `<span class="tag name ${k}" style="top:${py(y)}">${name}</span>`;
  root.querySelector('.plot').innerHTML = plot;
  let axis = c.prices.map(([t, y]) => `<span class="price" style="top:${py(y)}">${t}</span>`).join('');
  for (const [k, y, , v, left] of c.tags) axis += `<span class="tag value ${k}" style="top:${py(y)}"><b>${v}</b>${left ? `<em>${left}</em>` : ''}</span>`;
  root.querySelector('.prices').insertAdjacentHTML('afterbegin', axis);
  root.querySelector('.times').innerHTML = c.times.map(([t, x, b]) => `<span class="${b ? 'day' : ''}" style="left:${px(x)}">${t}</span>`).join('');
}
```
FILE: styles.css
```css
* { box-sizing: border-box; }
body {
  margin: 0;
  height: 100vh;
  display: flex;
  flex-direction: column;
  overflow: hidden;
  background: #0f0f0f;
  color: #d0d0d0;
  font: 9px/12px Lato, "Open Sans", sans-serif;
}
button, select { font: inherit; color: inherit; background: none; border: 0; padding: 0; margin: 0; }
button { display: inline-flex; align-items: center; justify-content: center; white-space: nowrap; }
h2, p { margin: 0; }
i, em { font-style: normal; }
.sprite { position: absolute; width: 0; height: 0; }
.ic { fill: none; stroke: currentColor; stroke-width: 1.2; flex: none; }
.s8 { width: 8px; height: 8px; }
.s10 { width: 10px; height: 10px; }
.s12 { width: 12px; height: 12px; }
.s14 { width: 14px; height: 14px; }
.s16 { width: 16px; height: 16px; }
.s18 { width: 18px; height: 18px; }
.ic.s8 { stroke-width: 2.5; }
.ic.s10, .ic.s12 { stroke-width: 1.6; }
.vsep { width: 1px; height: 14px; background: #3c3c3c; flex: none; }
.badge {
  position: absolute;
  top: 1px;
  right: 1px;
  min-width: 11px;
  padding: 0 2px;
  border-radius: 6px;
  background: #d9234e;
  color: #fff;
  font-size: 8px;
  line-height: 11px;
  font-weight: 700;
  text-align: center;
}

.titlebar { display: flex; align-items: stretch; height: 23px; background: #2e2e2e; flex: none; }
.tab { display: flex; align-items: center; gap: 2px; width: 164px; padding: 0 5px 0 8px; background: #0f0f0f; color: #eee; font-weight: 700; white-space: nowrap; }
.tab .up { color: #22a67c; }
.tab .fade { color: #666; font-weight: 400; }
.tab button { margin-left: auto; }
.newtab { padding: 0 7px; color: #aaa; }
.wincontrols { margin-left: auto; display: flex; align-items: center; gap: 20px; padding-right: 11px; color: #aaa; }
.wincontrols .vsep { margin: 0 -8px 0 -6px; }

.toolbar { display: flex; align-items: center; height: 31px; padding: 0 3px 0 8px; border-bottom: 2px solid #2c2c2c; flex: none; font-weight: 700; }
.avatar { position: relative; width: 18px; height: 18px; border-radius: 50%; background: #6a5aa8; color: #fff; font-size: 12px; }
.avatar .badge { top: -5px; right: -6px; }
.symbol { margin: 0 8px 0 12px; width: 84px; height: 18px; justify-content: space-between; padding: 0 1px 0 7px; border-radius: 9px; background: #3a3a3a; color: #eee; }
.gem { display: flex; align-items: center; justify-content: center; width: 16px; height: 16px; border-radius: 50%; background: #111; }
.toolbar > .vsep { margin: 0 4px 0 9px; }
.intervals { display: flex; justify-content: space-between; width: 546px; flex: none; }
.intervals button { height: 22px; padding: 0 3px; border-radius: 4px; }
.intervals .on, .tb.on { background: #3a3a3a; }
.tools, .account { display: flex; align-items: center; gap: 3px; }
.tools .vsep { margin: 0 1px; }
.account { margin-left: auto; }
.tb { width: 22px; height: 22px; border-radius: 4px; flex: none; }
.tb.white { background: #fff; color: #111; }
.tb.dim { color: #777; }
.car { width: 14px; height: 22px; }
.layoutname { flex-direction: column; padding: 0; line-height: 10px; }
.layoutname small { color: #2f55ff; font-size: 7px; line-height: 7px; font-weight: 400; }
.info { width: 15px; height: 15px; border: 1px solid #444; border-radius: 50%; margin-right: 7px; font-size: 8px; }
.more { width: 2px; height: 2px; margin: 0 -2px 0 5px; border-radius: 50%; background: #ccc; }
.pill { height: 19px; border-radius: 10px; }
.pill.dark { width: 50px; background: #000; border: 1px solid #333; color: #fff; margin-right: 2px; }
.pill.light { width: 51px; background: #fff; color: #111; }

.workspace { flex: 1; display: flex; min-height: 0; background: #2c2c2c; }
.rail { display: flex; flex-direction: column; align-items: center; background: #0f0f0f; color: #bbb; flex: none; }
.rail button { position: relative; flex: none; }
.rail hr { width: 24px; height: 1px; margin: 5px 0; border: 0; background: #3c3c3c; flex: none; }
.rail.left { width: 34px; padding: 4px 0 14px; margin-right: 3px; }
.rail.left button { width: 22px; height: 23px; margin: 1px 0; border-radius: 4px; }
.rail.left .on { background: #3a3a3a; }
.rail.left .tight { margin: 4px 0; }
.rail.left .fav { margin-top: auto; background: #fff; color: #111; }
.rail.right { width: 30px; margin-left: 3px; padding: 0 0 1px; }
.rail.right button { width: 30px; height: 30px; }
.rail.right .push { margin-top: auto; }
.rail.right hr { margin: 4px 0 3px; }
.rail.right .apps::before { content: ""; position: absolute; width: 22px; height: 22px; border-radius: 50%; background: #fff; }
.rail.right .apps svg { position: relative; }

.center { position: relative; flex: 1; min-width: 0; display: flex; flex-direction: column; }
.charts { flex: 1; min-height: 0; display: grid; grid-template-columns: 1fr 1fr; grid-template-rows: 272fr 273fr; gap: 2px; background: #222; }
.chart { display: grid; grid-template-columns: minmax(0, 1fr) 47px; grid-template-rows: minmax(0, 1fr) 18px; background: #fff; color: #131722; font-size: 8px; line-height: 10px; overflow: hidden; border-radius: 2px; }
#c2, #c3 { grid-template-columns: minmax(0, 1fr) 40px; }
#c4 { grid-template-columns: minmax(0, 1fr) 48px; }
.chart.gray { background: #dbdbdb; }
.plot { grid-area: 1 / 1; position: relative; overflow: hidden; }
.plot > svg:first-child { display: block; width: 100%; height: 100%; shape-rendering: crispEdges; }
#c3 .plot > svg:first-child, #c4 .plot > svg:first-child { shape-rendering: auto; }
.note, .event, .logo { position: absolute; transform: translate(-50%, -50%); white-space: nowrap; }
.event { color: #8b22a5; stroke-width: 2; }
.logo { width: 20px; height: 12px; color: #000; }
.note.wm { color: #8d8f96; font-size: 9px; }
.note.sm { color: #555; font-size: 8px; }
.note.big { color: #444; font-size: 12px; }
.prices { grid-area: 1 / 2; position: relative; overflow: hidden; border-left: 1px solid #333; display: flex; flex-direction: column; padding: 2px 1px 3px; }
.prices select { appearance: none; position: relative; height: 17px; padding: 0 3px; border-radius: 2px; background: #fff; background-image: linear-gradient(45deg, transparent 50%, #333 50%), linear-gradient(-45deg, transparent 50%, #333 50%); background-repeat: no-repeat; background-size: 2px 2px; background-position: right 6px center, right 4px center; font-size: 8px; }
.price, .tag { position: absolute; transform: translateY(-50%); white-space: nowrap; }
.price { left: 5px; }
.tag { padding: 1px 3px; font-weight: 700; line-height: 10px; }
.tag.name { right: 0; font-size: 7px; }
.tag.value { left: 0; right: 4px; padding: 1px 0 1px 5px; transform: translateY(-6px); }
.tag em { display: block; font-weight: 400; line-height: 9px; }
.tag.black { background: #000; color: #fff; }
.tag.lime { background: #10f510; color: #143a14; }
.tag.lime b { font-weight: 400; }
.tag.crimson { background: #d9234e; color: #fff; }
.al { position: relative; margin-top: auto; display: flex; justify-content: center; gap: 3px; }
.al button { width: 13px; height: 14px; border-radius: 3px; font-weight: 700; font-size: 9px; }
.al .on { background: #2a2a2a; color: #fff; }
.times { grid-area: 2 / 1; position: relative; overflow: hidden; border-top: 1px solid #333; }
.times span { position: absolute; top: 3px; transform: translateX(-50%); }
.times .day { font-weight: 700; }
.corner { grid-area: 2 / 2; border-top: 1px solid #333; border-left: 1px solid #333; display: flex; align-items: center; justify-content: center; }
.legend { grid-area: 1 / 1; position: relative; justify-self: start; align-self: start; display: flex; flex-direction: column; align-items: flex-start; padding: 3px 6px; }
.row { display: flex; align-items: center; gap: 6px; background: rgba(255, 255, 255, .5); }
.gray .row { background: none; }
.ltitle { display: flex; align-items: center; height: 15px; white-space: nowrap; }
.ltitle h2 { font: 400 10px/14px "Open Sans", sans-serif; margin: 0 9px 0 3px; }
.coin { flex: none; }
.btc { width: 12px; height: 12px; border-radius: 50%; background: #f0962c; color: #fff; font-weight: 700; line-height: 12px; text-align: center; }
.flag { width: 9px; height: 8px; clip-path: polygon(0 0, 100% 0, 70% 50%, 100% 100%, 0 100%); }
.flag.green { background: #7cc98a; }
.flag.red { background: #ea3a55; }
.flag.blue { background: #2a66ee; }
.rewdot { display: flex; align-items: center; justify-content: center; width: 12px; height: 12px; border-radius: 50%; background: #2f6fe0; color: #fff; margin-left: 8px; }
.rewdot svg { fill: #fff; }
.live { width: 10px; height: 10px; border: 3px solid #bfeee0; border-radius: 50%; background: #2fbf98; margin-left: 9px; }
.ohlc { display: flex; gap: 7px; height: 14px; align-items: center; white-space: nowrap; }
.trade { display: flex; align-items: center; margin-top: 1px; height: 22px; text-align: center; line-height: 10px; }
.trade button { flex-direction: column; height: 22px; border-radius: 4px; line-height: 10px; }
.solid button { width: 54px; color: #fff; }
.solid .sell { background: #e01f48; }
.solid .buy { background: #2f62f5; }
.solid .spread { width: 36px; line-height: 12px; }
.spread small { display: block; font-size: 7px; }
.outline { margin-top: 3px; }
.outline button { width: 45px; background: #fff; border: 1px solid #c9506c; color: #c22a4c; line-height: 9px; }
.outline .buy { width: 49px; border-color: #5b7fd8; color: #2f55c8; }
.outline .spread { width: 20px; }
.trade b, .spread { font-size: 9px; }
.count { height: 13px; width: 22px; gap: 3px; margin-top: 5px; border: 1px solid #e0e3eb; border-radius: 2px; background: #fff; font-size: 9px; }
.count.bare { background: none; border: 0; margin-top: 3px; }

.replay { position: relative; display: flex; align-items: center; justify-content: center; height: 33px; background: #0f0f0f; flex: none; font-weight: 700; }
.replay-mid { display: flex; align-items: center; gap: 9px; }
.replay-mid .plain { gap: 5px; }
.replay-mid .gapl { margin-left: 4px; }
.replay-mid .mid { width: 17px; color: #999; }
.rclose { position: absolute; right: 16px; }
.ranges { display: flex; align-items: center; gap: 7px; height: 27px; padding: 0 10px; border-top: 1px solid #2c2c2c; background: #0f0f0f; flex: none; }
.ranges > .vsep { margin: 0 -1px; }
.clock { display: flex; align-items: center; gap: 8px; margin-left: auto; }
.clock .gapl { margin-left: 3px; }
.trading { display: flex; align-items: center; gap: 5px; height: 24px; margin-top: 3px; padding: 0 6px; background: #0f0f0f; border-bottom: 1px solid #2c2c2c; flex: none; font-weight: 700; }
.tb.small { position: relative; width: 16px; height: 16px; }
.solidic { fill: #111; }
.dot { position: absolute; top: -1px; right: -1px; width: 4px; height: 4px; border-radius: 50%; background: #22b07d; }
.opere { height: 16px; padding: 0 8px; margin-left: 6px; border: 1px solid #4a4a4a; border-radius: 4px; }
.tright { display: flex; gap: 12px; margin-left: auto; }
.drawbar { position: absolute; left: 50%; bottom: 17px; transform: translateX(-50%); width: 421px; height: 26px; margin-left: -32px; display: flex; align-items: center; justify-content: space-between; padding: 0 1px 0 4px; border-radius: 4px; background: #1e1e1e; }
.drawbar button { width: 24px; height: 24px; }
.grip { width: 11px; color: #777; }

.taskbar { display: grid; grid-template-columns: 1fr auto 1fr; align-items: center; height: 32px; background: #202020; color: #eee; flex: none; font-size: 8px; line-height: 10px; }
.weather { display: flex; align-items: center; gap: 5px; padding-left: 10px; }
.apps-mid { display: flex; align-items: center; gap: 13px; }
.tvapp { position: relative; display: flex; align-items: center; justify-content: center; width: 16px; height: 16px; background: #000; border-radius: 2px; color: #fff; }
.tvapp::after { content: ""; position: absolute; bottom: -5px; width: 4px; height: 2px; border-radius: 1px; background: #999; }
.tvs { width: 12px; height: 8px; }
.tray { display: flex; align-items: center; justify-content: flex-end; gap: 5px; padding-right: 12px; text-align: right; }
```
